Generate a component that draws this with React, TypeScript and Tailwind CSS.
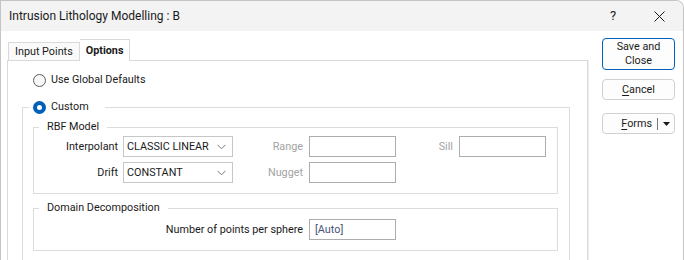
const ui = "font-['Roboto',sans-serif] text-[10.8px] leading-[16px] text-[#1a1a1a]";

function Radio({ checked, label }: { checked?: boolean; label: string }) {
  return (
    <span className="flex items-center gap-[5px] h-[16px]">
      {checked ? (
        <span className="w-[13px] h-[13px] rounded-full bg-[#005fb8] flex items-center justify-center">
          <span className="w-[5px] h-[5px] rounded-full bg-white" />
        </span>
      ) : (
        <span className="w-[13px] h-[13px] rounded-full border border-[#5c5c5c] bg-[#f7f7f7]" />
      )}
      <span>{label}</span>
    </span>
  );
}

function Select({ value }: { value: string }) {
  return (
    <div className="w-[110px] h-[21px] border border-[#c6c6c6] bg-white flex items-center pl-[3px] pr-[6px]">
      <span className="flex-1">{value}</span>
      <svg width="9" height="6" viewBox="0 0 9 6" className="text-[#7a7a7a]">
        <polyline points="0.5,0.8 4.5,4.8 8.5,0.8" fill="none" stroke="currentColor" strokeWidth="1" />
      </svg>
    </div>
  );
}

function Field({ label, disabled, value, labelW }: { label: string; disabled?: boolean; value?: string; labelW: string }) {
  return (
    <div className="flex items-center gap-[6px]">
      <span className={`${labelW} text-right ${disabled ? "text-[#a3a3a3]" : ""}`}>{label}</span>
      <div className="w-[87px] h-[21px] border border-[#adadad] bg-white flex items-center pl-[5px] text-[#4a5479]">
        {value}
      </div>
    </div>
  );
}

function Button({ children, primary, h = "h-[21px]" }: { children: React.ReactNode; primary?: boolean; h?: string }) {
  return (
    <div
      className={`w-[73px] ${h} rounded-[4px] border bg-[#fdfdfd] flex items-center justify-center text-center ${
        primary ? "border-[#005fb8]" : "border-[#d0d0d0]"
      }`}
    >
      {children}
    </div>
  );
}

export default function App() {
  return (
    <div className={`w-[684px] h-[260px] overflow-hidden bg-white border-t border-l border-r border-[#c4c4c4] rounded-tr-[8px] flex flex-col ${ui}`}>
      {/* Title bar */}
      <div className="h-[30px] shrink-0 bg-[#f3f3f3] flex items-center pl-[8px] font-['Roboto',sans-serif] text-[12px] text-[#1a1a1a]">
        <span className="flex-1">Intrusion Lithology Modelling : B</span>
        <span className="w-[46px] text-center text-[13px] ml-[2px]">?</span>
        <span className="w-[46px] flex justify-center mr-[1px]">
          <svg width="11" height="11" viewBox="0 0 11 11">
            <path d="M0.5 0.5 L10.5 10.5 M10.5 0.5 L0.5 10.5" stroke="#1a1a1a" strokeWidth="1" />
          </svg>
        </span>
      </div>

      {/* Body */}
      <div className="flex-1 flex pl-[6px] pt-[7px]">
        <div className="w-[581px] flex flex-col">
          {/* Tabs */}
          <div className="flex items-end h-[22px] pl-[1px]">
            <div className="h-[18px] px-[6px] border border-b-0 border-[#d9d9d9] bg-[#fafafa] flex items-center">Input Points</div>
            <div className="h-[22px] px-[6px] border border-b-0 border-l-0 border-[#d9d9d9] bg-white flex items-center font-bold relative top-[1px] z-10">
              Options
            </div>
          </div>

          {/* Panel */}
          <div className="flex-1 border border-[#d9d9d9] border-b-0 shadow-[1px_0_0_#efefef] pl-[14px] pt-[11px]">
            <div className="ml-[11px] h-[16px]">
              <Radio label="Use Global Defaults" />
            </div>

            <fieldset className="mt-[11px] w-[548px] border border-[#dcdcdc] border-b-0 pl-[10px] pt-[4px] h-[200px]">
              <legend className="-ml-[4px] pl-[4px] pr-[16px]">
                <Radio checked label="Custom" />
              </legend>

              <fieldset className="w-[525px] border border-[#dcdcdc] pt-[1px] pb-[10px]">
                <legend className="ml-[5px] px-[8px] h-[16px]">RBF Model</legend>
                <div className="flex items-center">
                  <span className="w-[84px] text-right">Interpolant</span>
                  <div className="ml-[5px]">
                    <Select value="CLASSIC LINEAR" />
                  </div>
                  <Field label="Range" disabled labelW="w-[70px]" />
                  <Field label="Sill" disabled labelW="w-[57px]" />
                </div>
                <div className="flex items-center mt-[5px]">
                  <span className="w-[84px] text-right">Drift</span>
                  <div className="ml-[5px]">
                    <Select value="CONSTANT" />
                  </div>
                  <Field label="Nugget" disabled labelW="w-[70px]" />
                </div>
              </fieldset>

              <fieldset className="mt-[6px] w-[525px] border border-[#dcdcdc] pt-[3px] pb-[10px]">
                <legend className="ml-[5px] px-[8px] h-[16px]">Domain Decomposition</legend>
                <div className="flex items-center">
                  <Field label="Number of points per sphere" value="[Auto]" labelW="w-[269px]" />
                </div>
              </fieldset>
            </fieldset>
          </div>
        </div>

        {/* Buttons */}
        <div className="ml-[14px] flex flex-col">
          <Button primary h="h-[32px]">
            <span className="leading-[14px]">
              Save and
              <br />
              Close
            </span>
          </Button>
          <div className="mt-[9px]">
            <Button>
              <span>
                <span className="underline underline-offset-[2px]">C</span>ancel
              </span>
            </Button>
          </div>
          <div className="mt-[13px]">
            <Button>
              <div className="flex items-center w-full h-full">
                <span className="flex-1 text-right pr-[5px]">
                  <span className="underline underline-offset-[2px]">F</span>orms
                </span>
                <span className="w-px h-[12px] bg-[#7a7a7a]" />
                <span className="w-[16px] flex justify-center">
                  <svg width="7" height="4" viewBox="0 0 7 4">
                    <polygon points="0,0 7,0 3.5,4" fill="#1a1a1a" />
                  </svg>
                </span>
              </div>
            </Button>
          </div>
        </div>
      </div>
    </div>
  );
}
